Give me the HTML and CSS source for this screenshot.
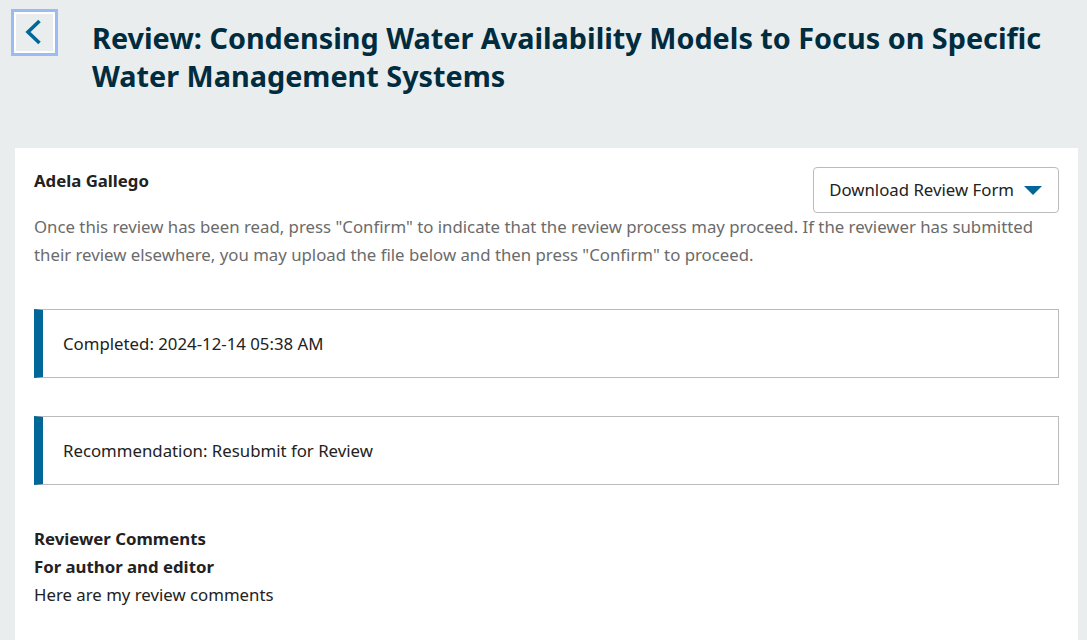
FILE: index.html
```html
<!DOCTYPE html>
<html lang="en">
<head>
<meta charset="utf-8">
<title>Review</title>
<link rel="stylesheet" href="styles.css">
</head>
<body>
<header class="page-header">
  <button class="back-btn" aria-label="Back">
    <svg width="18" height="28" viewBox="0 0 18 28"><path d="M15.5 3 L4 14 L15.5 25" fill="none" stroke="#006798" stroke-width="3.6"/></svg>
  </button>
  <h1 class="title">Review: Condensing Water Availability Models to Focus on Specific Water Management Systems</h1>
</header>
<main class="panel">
  <div class="top-row">
    <div class="reviewer">Adela Gallego</div>
    <button class="dl-btn">Download Review Form <span class="caret"></span></button>
  </div>
  <p class="desc">Once this review has been read, press "Confirm" to indicate that the review process may proceed. If the reviewer has submitted their review elsewhere, you may upload the file below and then press "Confirm" to proceed.</p>
  <div class="notice">Completed: 2024-12-14 05:38 AM</div>
  <div class="notice">Recommendation: Resubmit for Review</div>
  <div class="comments">
    <div class="bold">Reviewer Comments</div>
    <div class="bold">For author and editor</div>
    <div>Here are my review comments</div>
  </div>
</main>
</body>
</html>
```
FILE: styles.css
```css
html, body {
  margin: 0;
  padding: 0;
  background: #eaedee;
  font-family: "Noto Sans", "Open Sans", sans-serif;
  color: #222;
}
.page-header {
  display: flex;
  align-items: flex-start;
  padding: 9px 0 0 11px;
  height: 139px;
  box-sizing: border-box;
}
.back-btn {
  width: 47px;
  height: 47px;
  box-sizing: border-box;
  background: #eaedee;
  border: 3px solid #9dbbf3;
  box-shadow: inset 0 0 0 2px #fff;
  display: flex;
  align-items: center;
  justify-content: center;
  padding: 0 4px 1px 0;
  margin: 0;
  border-radius: 0;
}
.title {
  margin: 10px 0 0 34px;
  font-size: 28.8px;
  line-height: 38px;
  font-weight: 700;
  color: #002c40;
  max-width: 960px;
}
.panel {
  background: #fff;
  margin: 9px 9px 0 15px;
  padding: 22px 19px 30px 19px;
  min-height: 500px;
}
.top-row {
  display: flex;
  justify-content: space-between;
  align-items: flex-start;
}
.reviewer {
  font-weight: 700;
  font-size: 16.8px;
  line-height: 20px;
  margin-top: 1px;
}
.dl-btn {
  font-family: inherit;
  font-size: 16.8px;
  color: #222;
  background: #fff;
  border: 1px solid #bbb;
  border-radius: 4px;
  height: 46px;
  padding: 0 16px 1px 15px;
  display: flex;
  align-items: center;
  gap: 10px;
  margin-top: -3px;
}
.caret {
  width: 0;
  height: 0;
  border-left: 9px solid transparent;
  border-right: 9px solid transparent;
  border-top: 9px solid #006798;
  margin-top: 1px;
}
.desc {
  margin: 0;
  font-size: 16.8px;
  line-height: 28px;
  color: #6b6b6b;
  max-width: 1010px;
}
.notice {
  margin-top: 40px;
  border: 1px solid #bbb;
  border-left: 9px solid #006798;
  height: 69px;
  box-sizing: border-box;
  display: flex;
  align-items: center;
  padding-left: 20px;
  font-size: 16.8px;
  color: #222;
}
.notice + .notice {
  margin-top: 38px;
}
.comments {
  margin-top: 40px;
  font-size: 16.8px;
  line-height: 28px;
}
.bold {
  font-weight: 700;
}
```
